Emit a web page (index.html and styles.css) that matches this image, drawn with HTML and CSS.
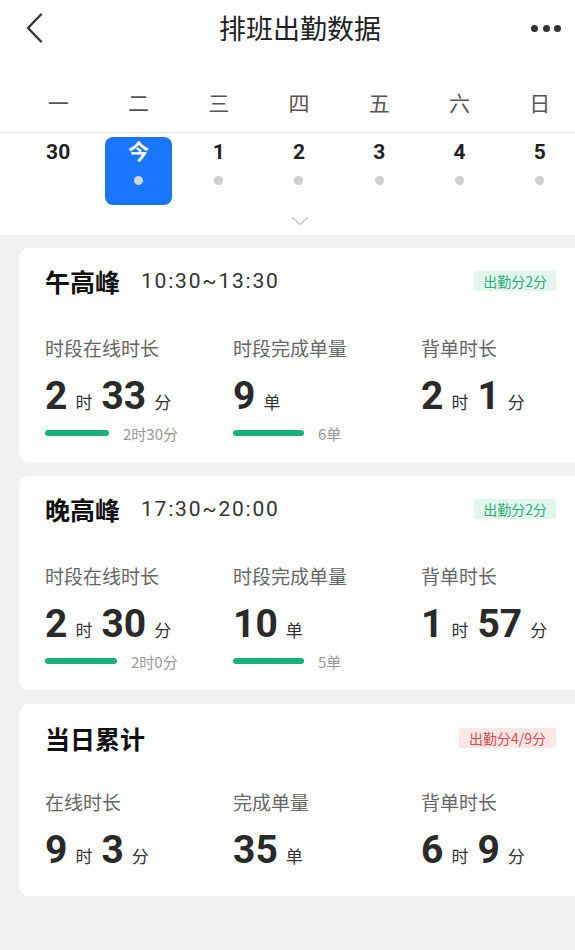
FILE: index.html
```html
<!DOCTYPE html>
<html lang="zh-CN">

<head>
    <meta charset="UTF-8">
    <meta name="viewport" content="width=device-width, initial-scale=1.0">
    <title>排班出勤数据</title>
    <link rel="stylesheet" href="styles.css">
</head>

<body>
    <div class="page">
        <div class="top">
            <div class="nav">
                <span class="back">
                    <svg width="18" height="30" viewBox="0 0 18 30">
                        <path d="M15 1.5 L2 15 L15 28.5" fill="none" stroke="#333" stroke-width="2.4" stroke-linecap="round" stroke-linejoin="round" />
                    </svg>
                </span>
                <h1 class="title">排班出勤数据</h1>
                <span class="more"><i></i><i></i><i></i></span>
            </div>
            <ul class="week">
                <li>一</li>
                <li>二</li>
                <li>三</li>
                <li>四</li>
                <li>五</li>
                <li>六</li>
                <li>日</li>
            </ul>
            <ul class="dates">
                <li><b>30</b></li>
                <li class="today"><b>今</b><i></i></li>
                <li><b>1</b><i></i></li>
                <li><b>2</b><i></i></li>
                <li><b>3</b><i></i></li>
                <li><b>4</b><i></i></li>
                <li><b>5</b><i></i></li>
            </ul>
            <div class="expand">
                <svg width="18" height="10" viewBox="0 0 18 10">
                    <path d="M1.5 1.5 L9 8.5 L16.5 1.5" fill="none" stroke="#c8c8c8" stroke-width="1.6" stroke-linecap="round" stroke-linejoin="round" />
                </svg>
            </div>
        </div>

        <div class="cards">
            <div class="card">
                <div class="card-head">
                    <h2>午高峰</h2>
                    <span class="period">10:30~13:30</span>
                    <span class="tag">出勤分2分</span>
                </div>
                <div class="stats">
                    <div class="stat">
                        <p class="label">时段在线时长</p>
                        <p class="value"><em>2</em>时<em>33</em>分</p>
                        <p class="goal"><span class="bar" style="width: 64px"></span>2时30分</p>
                    </div>
                    <div class="stat">
                        <p class="label">时段完成单量</p>
                        <p class="value"><em>9</em>单</p>
                        <p class="goal"><span class="bar" style="width: 71px"></span>6单</p>
                    </div>
                    <div class="stat">
                        <p class="label">背单时长</p>
                        <p class="value"><em>2</em>时<em>1</em>分</p>
                    </div>
                </div>
            </div>

            <div class="card">
                <div class="card-head">
                    <h2>晚高峰</h2>
                    <span class="period">17:30~20:00</span>
                    <span class="tag">出勤分2分</span>
                </div>
                <div class="stats">
                    <div class="stat">
                        <p class="label">时段在线时长</p>
                        <p class="value"><em>2</em>时<em>30</em>分</p>
                        <p class="goal"><span class="bar" style="width: 72px"></span>2时0分</p>
                    </div>
                    <div class="stat">
                        <p class="label">时段完成单量</p>
                        <p class="value"><em>10</em>单</p>
                        <p class="goal"><span class="bar" style="width: 71px"></span>5单</p>
                    </div>
                    <div class="stat">
                        <p class="label">背单时长</p>
                        <p class="value"><em>1</em>时<em>57</em>分</p>
                    </div>
                </div>
            </div>

            <div class="card card-sum">
                <div class="card-head">
                    <h2>当日累计</h2>
                    <span class="tag tag-red">出勤分4/9分</span>
                </div>
                <div class="stats">
                    <div class="stat">
                        <p class="label">在线时长</p>
                        <p class="value"><em>9</em>时<em>3</em>分</p>
                    </div>
                    <div class="stat">
                        <p class="label">完成单量</p>
                        <p class="value"><em>35</em>单</p>
                    </div>
                    <div class="stat">
                        <p class="label">背单时长</p>
                        <p class="value"><em>6</em>时<em>9</em>分</p>
                    </div>
                </div>
            </div>
        </div>
    </div>
</body>

</html>
```

FILE: styles.css
```css
* {
    margin: 0;
    padding: 0;
    box-sizing: border-box;
}

li {
    list-style: none;
}

html,
body {
    background-color: #f2f2f2;
    overflow: hidden;
}

body {
    font-family: "Noto Sans CJK SC", "Noto Sans", sans-serif;
    color: #222;
}

.page {
    width: 600px;
    min-height: 950px;
}

.top {
    background-color: #fff;
}

.nav {
    height: 56px;
    display: grid;
    grid-template-columns: 1fr auto 1fr;
    align-items: center;
}

.back {
    justify-self: start;
    display: flex;
    padding-left: 26px;
}

.title {
    font-size: 27px;
    font-weight: 400;
    line-height: 56px;
    color: #222;
}

.more {
    justify-self: end;
    display: flex;
    gap: 4.5px;
    padding-right: 39px;
}

.more i {
    width: 7px;
    height: 7px;
    border-radius: 50%;
    background-color: #333;
}

.week,
.dates {
    display: grid;
    grid-template-columns: repeat(7, 1fr);
    padding: 0 20px 0 18px;
    text-align: center;
}

.week {
    margin-top: 24px;
    padding-bottom: 8px;
    border-bottom: 1px solid #e8e8e8;
}

.week li {
    font-size: 21px;
    line-height: 44px;
    color: #555;
}

.dates {
    padding-top: 4px;
}

.dates li {
    height: 68px;
    width: 67px;
    justify-self: center;
    display: flex;
    flex-direction: column;
    align-items: center;
    padding-top: 4px;
    border-radius: 8px;
}

.dates b {
    font-family: Roboto, "Noto Sans CJK SC", sans-serif;
    font-size: 21px;
    font-weight: 700;
    line-height: 22px;
    color: #222;
}

.dates i {
    margin-top: 13px;
    width: 9px;
    height: 9px;
    border-radius: 50%;
    background-color: #cfcfcf;
}

.dates .today {
    background-color: #1a75ff;
}

.dates .today b {
    color: #fff;
}

.dates .today i {
    background-color: #d4d4d4;
}

.expand {
    height: 30px;
    display: flex;
    justify-content: center;
    padding-top: 11px;
}

.cards {
    padding: 13px 19px;
    display: flex;
    flex-direction: column;
    gap: 14px;
}

.card {
    background-color: #fff;
    border-radius: 10px;
    padding: 19px 25px 19px 26px;
}

.card-sum {
    padding-top: 20px;
    padding-bottom: 24px;
}

.card-head {
    height: 28px;
    display: flex;
    align-items: center;
}

.card-head h2 {
    font-size: 25px;
    font-weight: 700;
    color: #111;
}

.period {
    margin-left: 21px;
    font-family: Roboto, sans-serif;
    font-size: 21px;
    letter-spacing: 1.8px;
    color: #333;
}

.tag {
    margin-left: auto;
    height: 20px;
    line-height: 20px;
    padding: 0 9px;
    font-size: 14px;
    color: #2aae7c;
    background-color: #e2f6ee;
    border-radius: 2px;
}

.tag-red {
    color: #e14a4d;
    background-color: #fde6e6;
    padding: 0 10px;
}

.stats {
    margin-top: 41px;
    display: grid;
    grid-template-columns: 188px 188px 1fr;
}

.card-sum .stats {
    margin-top: 38px;
}

.label {
    font-size: 19px;
    line-height: 24px;
    color: #666;
}

.value {
    margin-top: 14px;
    height: 44px;
    display: flex;
    align-items: baseline;
    font-size: 17px;
    line-height: 44px;
    color: #333;
}

.value em {
    font-style: normal;
    font-family: Roboto, sans-serif;
    font-size: 39px;
    font-weight: 700;
    color: #2a2a2a;
    margin-right: 8px;
}

.value em:nth-of-type(2) {
    margin-left: 9px;
}

.goal {
    margin-top: 5px;
    height: 20px;
    display: flex;
    align-items: center;
    font-size: 15px;
    color: #999;
}

.bar {
    height: 6px;
    border-radius: 3px;
    background-color: #19b07a;
    margin-right: 14px;
}
```
